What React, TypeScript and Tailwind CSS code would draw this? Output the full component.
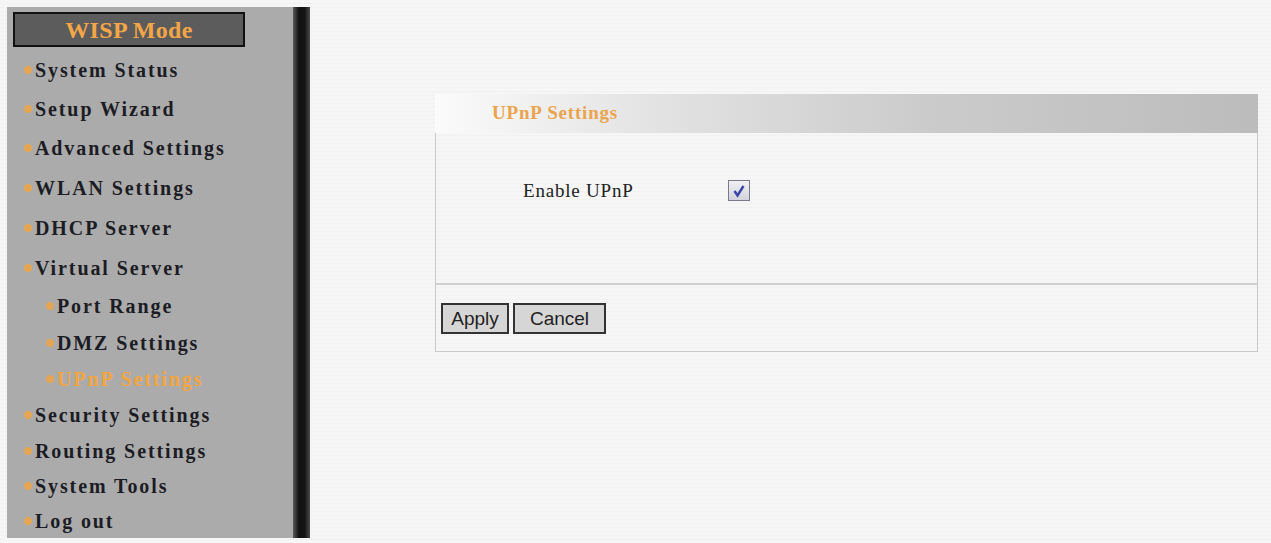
import React from 'react';

const MENU: { label: string; sub?: boolean; active?: boolean; h: number }[] = [
  { label: 'System Status', h: 39 },
  { label: 'Setup Wizard', h: 39 },
  { label: 'Advanced Settings', h: 40 },
  { label: 'WLAN Settings', h: 40 },
  { label: 'DHCP Server', h: 40 },
  { label: 'Virtual Server', h: 39 },
  { label: 'Port Range', sub: true, h: 37 },
  { label: 'DMZ Settings', sub: true, h: 37 },
  { label: 'UPnP Settings', sub: true, active: true, h: 36 },
  { label: 'Security Settings', h: 36 },
  { label: 'Routing Settings', h: 35 },
  { label: 'System Tools', h: 35 },
  { label: 'Log out', h: 35 },
];

function Sidebar() {
  return (
    <div className="mt-[7px] ml-[7px] flex h-[531px] w-[303px] shrink-0">
      <div className="flex w-[286px] flex-col bg-[#ababab] pt-[5px]">
        <div className="ml-[6px] flex h-[36px] w-[232px] items-center justify-center border-2 border-[#111] bg-[#5c5c5c]">
          <span className="font-['Liberation_Serif',serif] text-[24px] font-bold leading-none tracking-[0.3px] text-[#f2a648]">
            WISP Mode
          </span>
        </div>
        <ul className="mt-[3px] flex flex-col">
          {MENU.map((m) => (
            <li
              key={m.label}
              style={{ height: m.h }}
              className={`flex items-center ${m.sub ? 'pl-[39px]' : 'pl-[17px]'}`}
            >
              <span className="mr-[3px] h-[8px] w-[8px] rounded-full bg-[#f3a540] opacity-80" />
              <span
                className={`font-['Liberation_Serif',serif] text-[20px] font-bold leading-none tracking-[1.9px] ${
                  m.active ? 'text-[#f3a540]' : 'text-[#1c1c24]'
                }`}
              >
                {m.label}
              </span>
            </li>
          ))}
        </ul>
      </div>
      <div className="w-[17px] bg-[linear-gradient(to_right,#5a5a5a,#111_35%,#151515_70%,#4a4a4a)]" />
    </div>
  );
}

function CheckBox() {
  return (
    <span className="flex h-[21px] w-[22px] items-center justify-center border border-[#7a7a88] bg-[linear-gradient(#f0f0f5,#d2d2dc)]">
      <svg width="14" height="14" viewBox="0 0 14 14">
        <path d="M2.5 7 L5.5 11.5 L11.5 2" fill="none" stroke="#3b45a8" strokeWidth="2.4" />
      </svg>
    </span>
  );
}

export default function App() {
  return (
    <div className="flex h-[543px] w-[1271px] overflow-hidden bg-[repeating-linear-gradient(#f6f6f6_0px,#f6f6f6_3px,#ededed_4px)]">
      <Sidebar />
      <div className="flex-1 pl-[125px] pr-[13px] pt-[94px]">
        <div className="flex h-[39px] items-center bg-[linear-gradient(to_right,#fbfbfb,#e4e4e4_25%,#cbcbcb_60%,#bcbcbc)] pl-[57px]">
          <span className="font-['Liberation_Serif',serif] text-[19px] font-bold tracking-[0.8px] text-[#eba44e]">
            UPnP Settings
          </span>
        </div>
        <div className="border-x border-b border-[#c9c9c9]">
          <div className="flex h-[152px] items-start border-b-2 border-[#d0d0d0] pt-[44px]">
            <span className="ml-[87px] w-[205px] font-['Liberation_Serif',serif] text-[19px] tracking-[0.8px] text-[#222]">
              Enable UPnP
            </span>
            <span className="mt-[3px]">
              <CheckBox />
            </span>
          </div>
          <div className="flex h-[66px] items-start gap-[4px] pl-[5px] pt-[18px]">
            <button className="h-[31px] w-[68px] border-2 border-[#333] bg-[#d6d6d6] font-['Liberation_Sans',sans-serif] text-[19px] leading-none text-[#222]">
              Apply
            </button>
            <button className="h-[31px] w-[93px] border-2 border-[#333] bg-[#d6d6d6] font-['Liberation_Sans',sans-serif] text-[19px] leading-none text-[#222]">
              Cancel
            </button>
          </div>
        </div>
      </div>
    </div>
  );
}
